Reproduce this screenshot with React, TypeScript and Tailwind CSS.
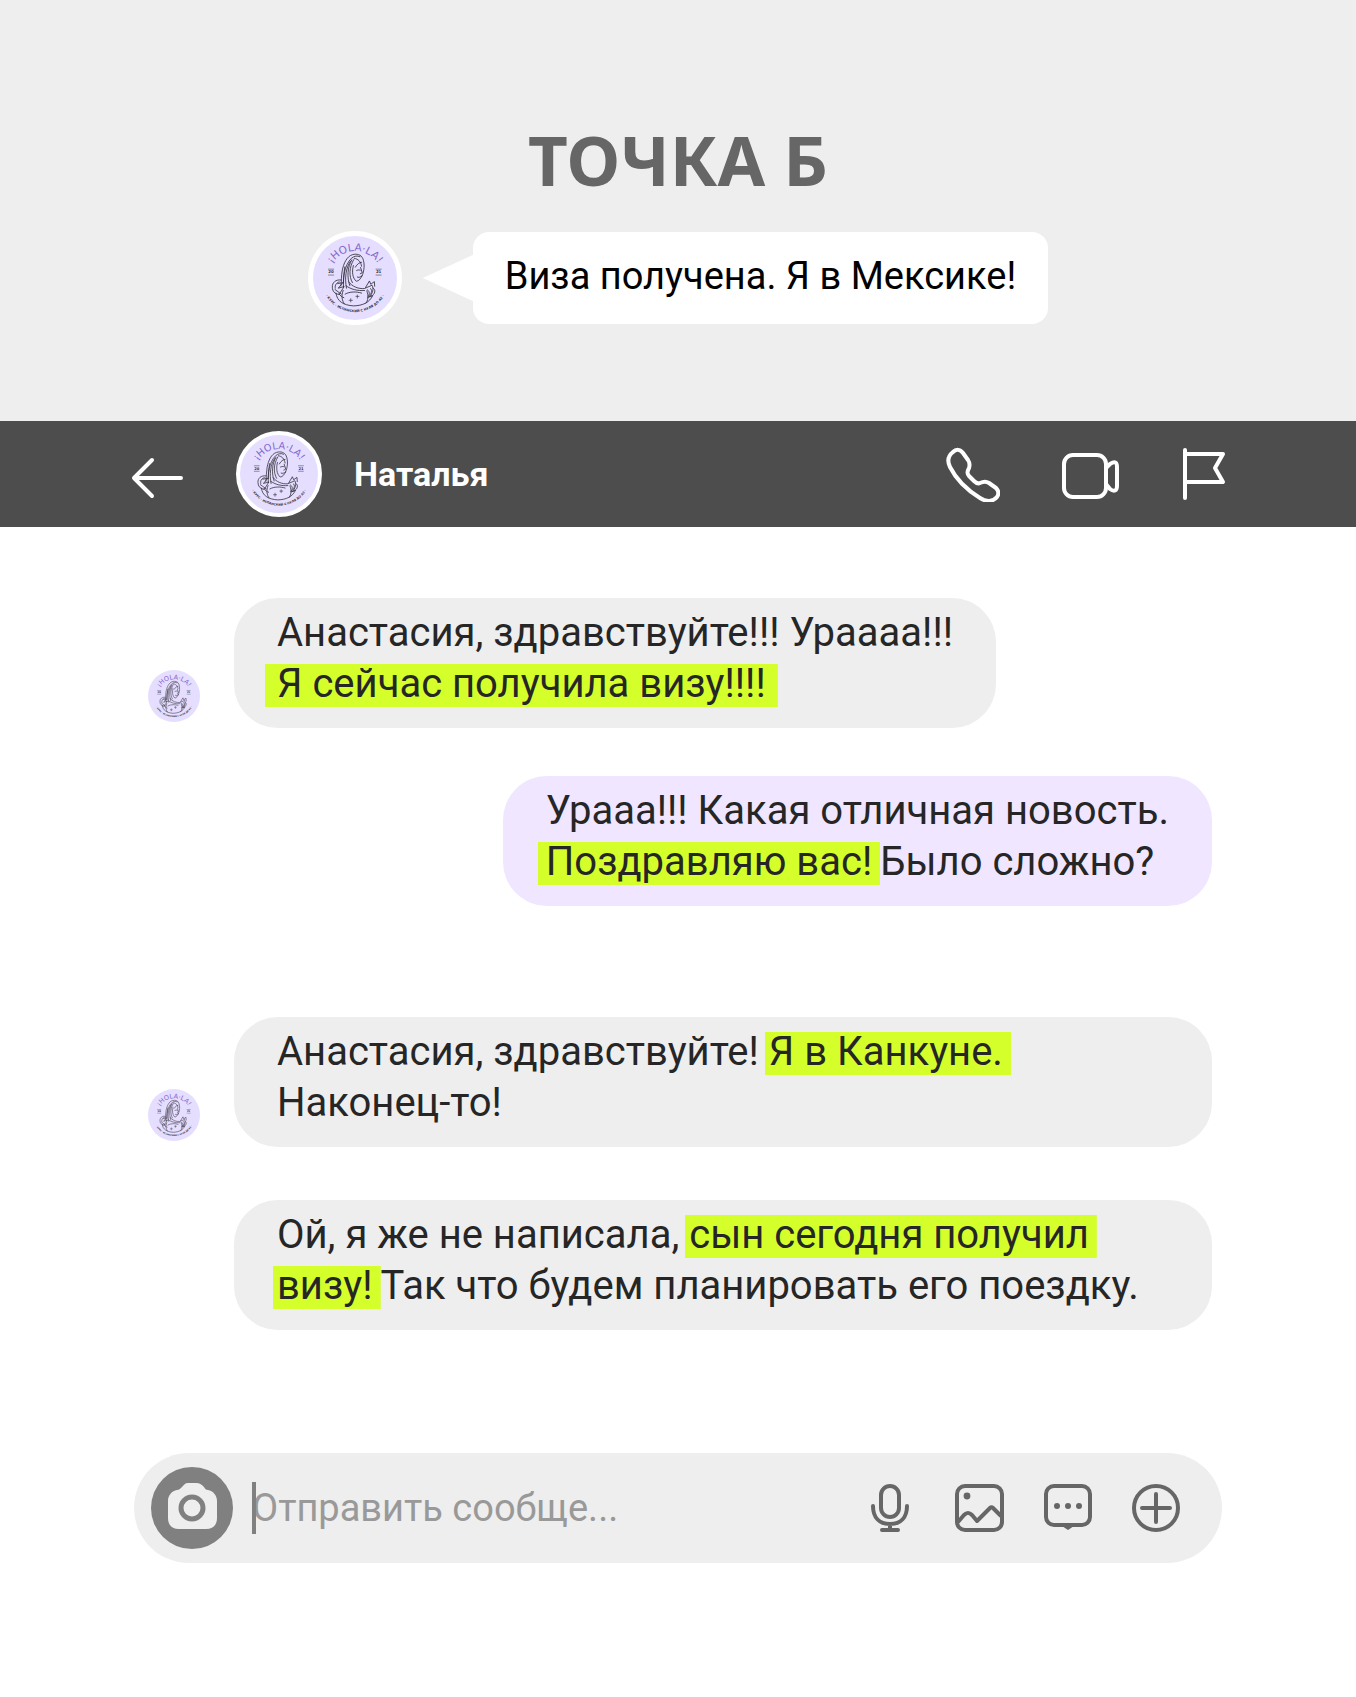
import type { ReactNode } from "react";

export default function App() {
  return (
    <div className="w-full bg-white font-[Roboto,sans-serif]">
      <header className="flex flex-col items-center bg-[#eeeeee] pt-[119px] pb-24">
        <h1 className="font-['Noto_Sans',sans-serif] text-[69px] leading-[80px] font-bold text-[#666666]">ТОЧКА Б</h1>
        <div className="mt-8 flex items-center">
          <Avatar className="size-[94px] border-[5px] border-white" />
          <div className="ml-[21px] h-[47px] w-[51px] bg-white [clip-path:polygon(0_50%,100%_0,100%_100%)]" />
          <p className="-ml-px rounded-2xl bg-white px-8 pt-[21px] pb-[25px] text-[38px] leading-[46px] text-black">
            Виза получена. Я в Мексике!
          </p>
        </div>
      </header>

      <nav className="flex h-[106px] items-center bg-[#4d4d4d] pr-[130px] pl-[131px] text-white">
        <button type="button" aria-label="Назад">
          <BackIcon />
        </button>
        <Avatar className="ml-[52px] size-[86px] border-4 border-white" />
        <span className="ml-8 text-[34px] leading-10 font-bold">Наталья</span>
        <div className="ml-auto flex items-center gap-[62px]">
          <button type="button" aria-label="Позвонить">
            <PhoneIcon />
          </button>
          <button type="button" aria-label="Видеозвонок">
            <VideoIcon />
          </button>
          <button type="button" aria-label="Пожаловаться">
            <FlagIcon />
          </button>
        </div>
      </nav>

      <main className="flex flex-col pt-[71px] pr-36 pl-[148px] text-[40px] leading-[51px] text-[#262626]">
        <div className="flex items-end">
          <Avatar className="mb-[6px] size-[52px]" />
          <Bubble className="ml-[34px] bg-[#eeeeee]">
            <Line>Анастасия, здравствуйте!!! Ураааа!!!</Line>
            <Line>
              <Mark className="-ml-3 px-3">Я сейчас получила визу!!!!</Mark>
            </Line>
          </Bubble>
        </div>

        <Bubble className="mt-12 self-end bg-[#f0e6ff]">
          <Line>Урааа!!! Какая отличная новость.</Line>
          <Line>
            <Mark className="-ml-2 px-2">Поздравляю вас!</Mark>Было сложно?
          </Line>
        </Bubble>

        <div className="mt-[111px] flex items-end">
          <Avatar className="mb-[6px] size-[52px]" />
          <Bubble className="ml-[34px] grow bg-[#eeeeee]">
            <Line>
              Анастасия, здравствуйте! <Mark className="-ml-1 pr-2 pl-1">Я в Канкуне.</Mark>
            </Line>
            <Line>Наконец-то!</Line>
          </Bubble>
        </div>

        <Bubble className="mt-[53px] ml-[86px] bg-[#eeeeee]">
          <Line>
            Ой, я же не написала, <Mark className="-ml-1 pr-2 pl-1">сын сегодня получил</Mark>
          </Line>
          <Line>
            <Mark className="-ml-1 pr-2 pl-1">визу!</Mark>Так что будем планировать его поездку.
          </Line>
        </Bubble>
      </main>

      <footer className="px-[134px] pt-[123px] pb-[134px]">
        <form className="flex h-[110px] items-center rounded-full bg-[#eeeeee] pr-[42px] pl-[17px] text-[#666666]">
          <button type="button" aria-label="Камера" className="size-[82px] shrink-0">
            <CameraIcon />
          </button>
          <label className="relative ml-[19px] flex min-w-0 grow items-center">
            <input
              type="text"
              aria-label="Сообщение"
              placeholder="Отправить сообще..."
              className="w-full bg-transparent text-[38px] leading-[52px] outline-none placeholder:text-[#999999]"
            />
            <span className="pointer-events-none absolute inset-y-0 left-0 w-1 bg-[#808080]" />
          </label>
          <div className="flex shrink-0 items-center gap-10">
            <button type="button" aria-label="Голосовое сообщение">
              <MicIcon />
            </button>
            <button type="button" aria-label="Фото">
              <ImageIcon />
            </button>
            <button type="button" aria-label="Шаблоны">
              <ChatIcon />
            </button>
            <button type="button" aria-label="Ещё">
              <PlusIcon />
            </button>
          </div>
        </form>
      </footer>
    </div>
  );
}

function Bubble({ children, className = "" }: { children: ReactNode; className?: string }) {
  return <div className={`rounded-[44px] px-[43px] pt-[9px] pb-[19px] ${className}`}>{children}</div>;
}

function Line({ children }: { children: ReactNode }) {
  return <p className="whitespace-nowrap">{children}</p>;
}

function Mark({ children, className = "" }: { children: ReactNode; className?: string }) {
  return (
    <mark
      className={`bg-transparent bg-[linear-gradient(#d4ff2a,#d4ff2a)] bg-[size:100%_43px] bg-bottom bg-no-repeat text-inherit ${className}`}
    >
      {children}
    </mark>
  );
}

function Avatar({ className = "" }: { className?: string }) {
  return (
    <div className={`shrink-0 overflow-hidden rounded-full bg-[#e5deff] ${className}`}>
      <svg viewBox="37 44 256 256" className="block size-full" fill="none" stroke="#33303c" strokeWidth="2.6" strokeLinecap="round" strokeLinejoin="round">
        <path id="logo-top" d="M83 172a82 82 0 0 1 164 0" stroke="none" />
        <path id="logo-bottom" d="M61 172a104 104 0 0 0 208 0" stroke="none" />
        <text fill="#8468cc" stroke="none" textAnchor="middle" className="font-['DejaVu_Sans',sans-serif] text-[32px]">
          <textPath href="#logo-top" startOffset="50%">¡HOLA·LA!</textPath>
        </text>
        <text fill="#33303c" stroke="none" textAnchor="middle" className="font-['DejaVu_Sans',sans-serif] text-[10px] font-bold">
          <textPath href="#logo-bottom" startOffset="50%">· КУРС - ИСПАНСКИЙ С НУЛЯ ДО А2 ·</textPath>
        </text>
        <g fill="#33303c" stroke="none" textAnchor="middle" className="font-['DejaVu_Sans',sans-serif] text-[12px] font-bold">
          <text x="92" y="158">20</text>
          <text x="237" y="158">21</text>
        </g>
        <path d="M84 145h16M84 163h16M229 145h16M229 163h16" strokeWidth="1.6" />
        {/* hair */}
        <path d="M122 196c2-14 1-30 4-46 4-22 14-44 31-49 14-4 27 0 32 12 6 16 5 36-3 54" />
        <path d="M130 200c-2-28 2-66 24-88 8-7 18-9 26-5" />
        <path d="M139 203c-6-30-2-62 12-82M149 195c-9-26-7-56 6-78M157 186c-11-20-10-46 4-70" />
        <path d="M134 138c-3 18-4 36-4 50M163 112c12 2 20 10 22 24" />
        {/* face */}
        <path d="M160 134c-5 18-3 38 9 48 8-1 14-8 17-17M166 139c6-10 12-14 19-15M170 149c4-2 7-2 11-1M182 140l5 16-6 3M172 169c4 2 7 1 10-1" />
        {/* scarf and arms */}
        <path d="M146 184c10 14 30 22 48 20l23-10c6 12 2 24-8 36M138 196c14 10 34 16 56 14" />
        <path d="M122 178c-16-2-27 8-26 22 0 13 8 20 18 22M117 184c-9 2-14 10-12 19M116 223l16-25-18 5 14-17-16 3M104 207l19 14" />
        <path d="M197 201l12-20 4 10 11-8 1 14M212 204c6 4 5 13-3 21M203 208c8 6 7 15 1 22M220 203c9 4 8 18-7 26" />
        {/* dress */}
        <path d="M107 218c3 25 22 37 54 39 28-1 48-10 58-31M129 210c-7 17-3 32 3 40M201 211c6 16 4 30-3 38M135 221c14-8 34-8 50-3M116 220c4 6 9 10 15 12M205 231l11-5" />
        <path d="M152 235v10M147 240h10M172 224v9M168 228h9" strokeWidth="2" />
      </svg>
    </div>
  );
}

function BackIcon() {
  return (
    <svg width="53" height="44" viewBox="0 0 53 44" fill="none" stroke="currentColor" strokeWidth="4" strokeLinecap="round" strokeLinejoin="round" className="mt-2" aria-hidden>
      <path d="M50 22H3M21 4L3 22l18 18" />
    </svg>
  );
}

function PhoneIcon() {
  return (
    <svg width="54" height="56" viewBox="0 0 54 56" fill="none" stroke="currentColor" strokeWidth="4" strokeLinejoin="round" aria-hidden>
      <path d="M7 6C10 3 14 3 17 7l5 7c2 3 2 5 1 8-2 4-2 5 0 8l5 5c2 2 4 3 6 2 4-2 6-2 9 0l7 5c3 3 3 6 1 9-4 5-11 5-17 1C21 44 10 33 4 21 1 15 2 10 7 6z" />
    </svg>
  );
}

function VideoIcon() {
  return (
    <svg width="58" height="46" viewBox="0 0 58 46" fill="none" stroke="currentColor" strokeWidth="4" strokeLinejoin="round" className="mt-1" aria-hidden>
      <rect x="2" y="2" width="42" height="42" rx="9" />
      <path d="M44 15l4-4c5-3 7-2 7 3v19c0 5-3 6-7 3l-4-5" />
    </svg>
  );
}

function FlagIcon() {
  return (
    <svg width="44" height="54" viewBox="0 0 44 54" fill="none" stroke="currentColor" strokeWidth="4" strokeLinecap="round" strokeLinejoin="round" aria-hidden>
      <path d="M3 3v48M3 7h38l-8 14 8 14H3" />
    </svg>
  );
}

function CameraIcon() {
  return (
    <svg viewBox="0 0 82 82" className="block size-full" aria-hidden>
      <circle cx="41" cy="41" r="41" fill="#808080" />
      <path d="M37 16h8c4 0 6 2 8 4 1 2 2 3 4 3 5 1 9 5 9 11v17c0 7-4 11-11 11H28c-7 0-11-4-11-11V34c0-6 4-10 9-11 2 0 3-1 5-3s3-4 6-4z" fill="#eeeeee" />
      <circle cx="41" cy="41" r="11" fill="none" stroke="#808080" strokeWidth="5" />
    </svg>
  );
}

function MicIcon() {
  return (
    <svg width="48" height="48" viewBox="0 0 48 48" fill="none" stroke="currentColor" strokeWidth="4" strokeLinecap="round" aria-hidden>
      <rect x="14" y="2" width="18" height="31" rx="9" />
      <path d="M6 22c0 11 6 18 17 18s17-7 17-18M23 40v6M15 46h16" />
    </svg>
  );
}

function ImageIcon() {
  return (
    <svg width="49" height="48" viewBox="0 0 49 48" fill="none" stroke="currentColor" strokeWidth="4" strokeLinejoin="round" aria-hidden>
      <rect x="2" y="2" width="45" height="44" rx="8" />
      <path d="M3 38l6-7c3-3 5-3 8 0l5 6 13-13c1-1 2-1 3 0l8 8" />
      <circle cx="12" cy="12" r="3.4" fill="currentColor" stroke="none" />
    </svg>
  );
}

function ChatIcon() {
  return (
    <svg width="48" height="48" viewBox="0 0 48 48" fill="none" stroke="currentColor" strokeWidth="4" aria-hidden>
      <rect x="2" y="2" width="44" height="39" rx="8" />
      <path d="M18 42h12l-6 4z" fill="currentColor" stroke="none" />
      <g fill="currentColor" stroke="none">
        <circle cx="13" cy="22" r="3" />
        <circle cx="24" cy="22" r="3" />
        <circle cx="35" cy="22" r="3" />
      </g>
    </svg>
  );
}

function PlusIcon() {
  return (
    <svg width="48" height="48" viewBox="0 0 48 48" fill="none" stroke="currentColor" strokeWidth="4" strokeLinecap="round" aria-hidden>
      <circle cx="24" cy="24" r="22" />
      <path d="M24 10v28M10 24h28" />
    </svg>
  );
}
